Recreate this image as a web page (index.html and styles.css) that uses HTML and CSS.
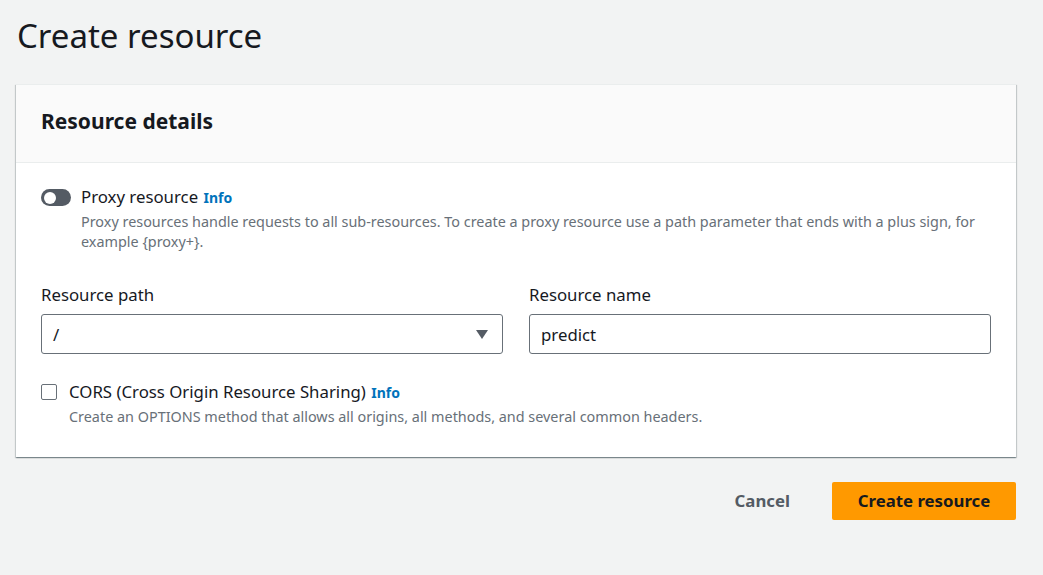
FILE: index.html
```html
<!DOCTYPE html>
<html>
<head>
<meta charset="utf-8">
<link rel="stylesheet" href="styles.css">
</head>
<body>
<div class="page">
  <h1 class="title">Create resource</h1>
  <div class="card">
    <div class="card-header"><h2>Resource details</h2></div>
    <div class="card-body">
      <div class="toggle-row">
        <span class="toggle"><span class="knob"></span></span>
        <div class="toggle-text">
          <div class="opt-label">Proxy resource <a class="info">Info</a></div>
          <div class="desc">Proxy resources handle requests to all sub-resources. To create a proxy resource use a path parameter that ends with a plus sign, for example {proxy+}.</div>
        </div>
      </div>
      <div class="fields">
        <div class="field">
          <div class="field-label">Resource path</div>
          <div class="input select"><span>/</span>
            <svg class="caret" width="12" height="10" viewBox="0 0 12 10"><path d="M0 1h12L6 10z" fill="#545b64"/></svg>
          </div>
        </div>
        <div class="field">
          <div class="field-label">Resource name</div>
          <div class="input"><span>predict</span></div>
        </div>
      </div>
      <div class="check-row">
        <span class="checkbox"></span>
        <div class="toggle-text">
          <div class="opt-label">CORS (Cross Origin Resource Sharing) <a class="info">Info</a></div>
          <div class="desc">Create an OPTIONS method that allows all origins, all methods, and several common headers.</div>
        </div>
      </div>
    </div>
  </div>
  <div class="actions">
    <button class="btn-link">Cancel</button>
    <button class="btn-primary">Create resource</button>
  </div>
</div>
</body>
</html>
```
FILE: styles.css
```css
html, body {
  margin: 0;
  padding: 0;
  background: #f2f3f3;
  font-family: "Noto Sans", "Open Sans", sans-serif;
  color: #16191f;
}
.page {
  width: 1000px;
  margin-left: 16px;
  padding-top: 14px;
}
.title {
  margin: 0 0 0 1px;
  font-size: 33px;
  font-weight: 400;
  line-height: 44px;
  height: 70px;
}
.card {
  background: #fff;
  box-shadow: 0 1px 1px 0 rgba(0,28,36,.3), 1px 1px 1px 0 rgba(0,28,36,.15), -1px 1px 1px 0 rgba(0,28,36,.15);
  border-top: 1px solid #eaeded;
}
.card-header {
  background: #fafafa;
  border-bottom: 1px solid #eaeded;
  height: 78px;
  box-sizing: border-box;
  display: flex;
  align-items: center;
  padding: 0 25px 5px;
}
.card-header h2 {
  margin: 0;
  font-size: 21px;
  font-weight: 700;
  line-height: 28px;
}
.card-body {
  padding: 23px 25px 30px;
}
.toggle-row, .check-row {
  display: flex;
  align-items: flex-start;
}
.toggle {
  width: 30px;
  height: 17px;
  border-radius: 9px;
  background: #545b64;
  margin-top: 3px;
  margin-right: 10px;
  position: relative;
  flex: none;
}
.knob {
  position: absolute;
  left: 3px;
  top: 2.5px;
  width: 12px;
  height: 12px;
  border-radius: 50%;
  background: #fff;
}
.opt-label {
  font-size: 16.8px;
  line-height: 22px;
}
.info {
  color: #0073bb;
  font-weight: 700;
  font-size: 14px;
  margin-left: 1px;
}
.desc {
  font-size: 14.4px;
  line-height: 20px;
  color: #687078;
  margin-top: 3px;
}
.fields {
  display: grid;
  grid-template-columns: 1fr 1fr;
  column-gap: 26px;
  margin-top: 32px;
}
.field-label {
  font-size: 16.8px;
  line-height: 22px;
  margin-bottom: 8px;
}
.input {
  height: 40px;
  box-sizing: border-box;
  border: 1px solid #687078;
  border-radius: 3px;
  display: flex;
  align-items: center;
  padding: 0 11px;
  font-size: 16.8px;
}
.select {
  justify-content: space-between;
  padding-right: 14px;
}
.caret { display: block; }
.check-row {
  margin-top: 27px;
}
.checkbox {
  width: 14px;
  height: 14px;
  border: 1px solid #687078;
  border-radius: 2px;
  margin-top: 3px;
  margin-right: 12px;
  flex: none;
}
.actions {
  display: flex;
  justify-content: flex-end;
  align-items: center;
  margin-top: 24px;
  gap: 22px;
}
.btn-link, .btn-primary {
  font-family: inherit;
  font-size: 16.8px;
  font-weight: 700;
  border: none;
  cursor: pointer;
}
.btn-link {
  background: none;
  color: #545b64;
  padding: 8px 20px;
}
.btn-primary {
  background: #ff9900;
  color: #16191f;
  border-radius: 2px;
  height: 38px;
  width: 184px;
  padding: 0;
}
```
